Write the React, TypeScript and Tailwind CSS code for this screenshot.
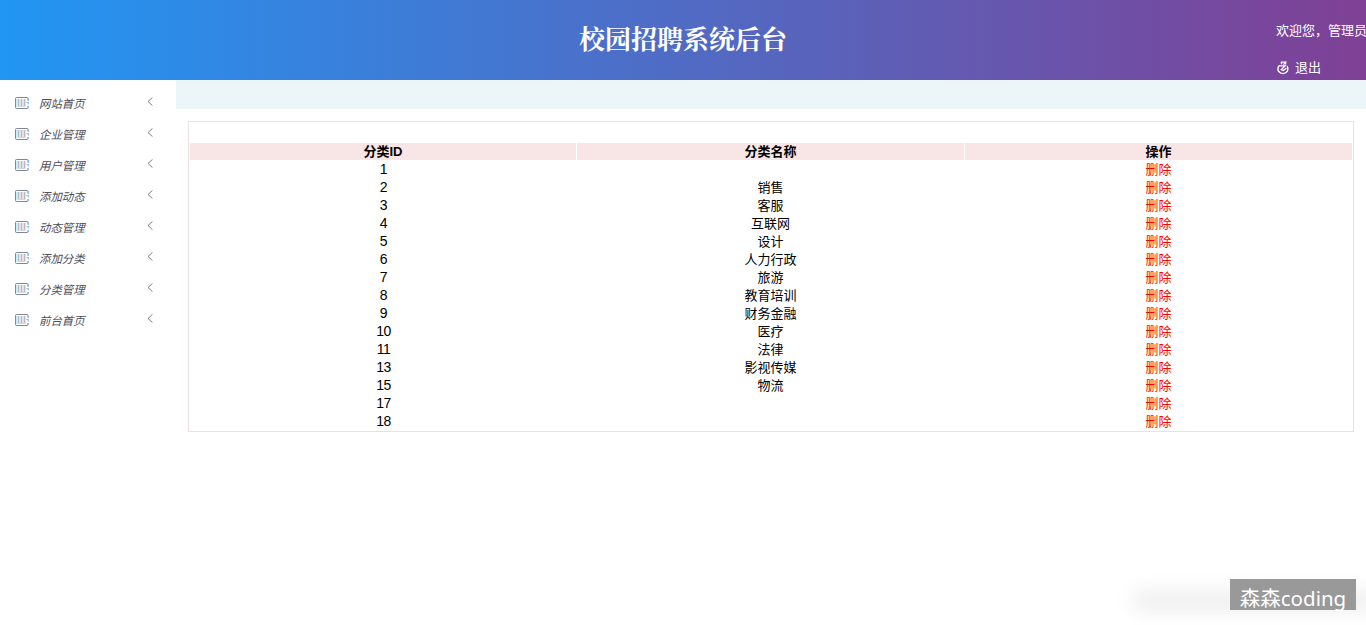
const menu = ["网站首页", "企业管理", "用户管理", "添加动态", "动态管理", "添加分类", "分类管理", "前台首页"];

const rows: [number, string][] = [
  [1, ""],
  [2, "销售"],
  [3, "客服"],
  [4, "互联网"],
  [5, "设计"],
  [6, "人力行政"],
  [7, "旅游"],
  [8, "教育培训"],
  [9, "财务金融"],
  [10, "医疗"],
  [11, "法律"],
  [13, "影视传媒"],
  [15, "物流"],
  [17, ""],
  [18, ""],
];

function ListIcon() {
  return (
    <svg width="14" height="12" viewBox="0 0 14 12" fill="none" className="-mt-[2px] shrink-0">
      <path d="M13 3.5V1.5a1 1 0 0 0-1-1H1.5a1 1 0 0 0-1 1v9a1 1 0 0 0 1 1H12a1 1 0 0 0 1-1V9" stroke="#7f8796" />
      <path d="M1.5 1.5v9" stroke="#c4f0fa" />
      <path d="M3.5 2v7M6.5 2v7M9.5 2v7" stroke="#b9b8c4" strokeWidth="1.8" />
      <path d="M2.5 9.5h8" stroke="#d3d6dd" />
      <path d="M13.3 1v3M13.3 5v2.5M13.3 9v2" stroke="#8fbce8" strokeWidth="1.2" />
      <path d="M11.5 5.5h1.3" stroke="#9caabb" />
    </svg>
  );
}

function ExitIcon() {
  return (
    <svg width="12" height="14" viewBox="0 0 12 14" fill="none" stroke="#fff" className="shrink-0">
      <path d="M2.6 4.4A5 4.6 0 1 0 10 5.2" strokeWidth="1.4" />
      <path d="M3.8 1.2h4.8L6.5 3.6M8.6 1.2v2.2M4 1.2l.8 2" strokeWidth="1.3" />
      <path d="M2.8 4.8h5.4L4.3 8.6l1.8 1 3.4-2.4" strokeWidth="1.3" />
    </svg>
  );
}

export default function App() {
  return (
    <div className="relative flex h-[625px] w-full flex-col overflow-hidden bg-white font-['Liberation_Sans','Noto_Sans_CJK_SC',sans-serif] text-[13px] text-black">
      <header className="grid h-20 shrink-0 grid-cols-[1fr_auto_1fr] bg-linear-to-r/srgb from-[#2196f3] to-[#7f4095] text-white">
        <div />
        <h1 className="pt-[18px] font-['Noto_Serif_CJK_SC','Noto_Sans_CJK_SC',serif] text-[26px] leading-[40px] font-bold whitespace-nowrap">
          校园招聘系统后台
        </h1>
        <div className="flex w-[90px] flex-col justify-self-end pt-[21px] whitespace-nowrap">
          <span className="leading-5">欢迎您，管理员</span>
          <a className="mt-[17px] flex items-center gap-[6px] pl-px leading-5">
            <ExitIcon />
            退出
          </a>
        </div>
      </header>

      <div className="flex flex-1">
        <aside className="w-44 shrink-0 pt-2">
          {menu.map((item) => (
            <a key={item} className="flex h-[31px] items-center pr-[23px] pl-[15px]">
              <ListIcon />
              <span className="ml-[10px] flex-1 pt-px text-[11.4px] leading-5 text-[#4b4e5c] italic">{item}</span>
              <svg width="6" height="9" viewBox="0 0 6 9" fill="none" className="-mt-[5px]">
                <path d="M5.4.5 1 4.5l4.4 4" stroke="#787e8b" strokeWidth="1" />
              </svg>
            </a>
          ))}
        </aside>

        <main className="flex-1">
          <div className="h-[29px] bg-[#ecf5f8]" />
          <div className="mx-3 mt-3 border border-[#e9e2e5] pt-[21px]">
            <div className="mr-px ml-px grid grid-cols-[386fr_387fr_387fr] gap-px text-center font-bold">
              {["分类ID", "分类名称", "操作"].map((title) => (
                <div key={title} className="h-[17px] bg-[#f8e6e6] leading-[18px]">
                  {title}
                </div>
              ))}
            </div>
            <div className="pt-px">
              {rows.map(([id, name]) => (
                <div
                  key={id}
                  className="mr-px ml-px grid h-[18px] grid-cols-[386fr_387fr_387fr] gap-px text-center leading-[18px]"
                >
                  <span className="pl-px text-[14px] leading-[17px] tracking-[-0.5px]">{id}</span>
                  <span>{name}</span>
                  <a className="text-[#ff0000]">删除</a>
                </div>
              ))}
            </div>
          </div>
        </main>
      </div>

      <div className="absolute top-[590px] left-[1134px] h-[22px] w-[240px] bg-black/6 blur-[9px]" />
      <div className="absolute top-[579px] left-[1230px] h-[31px] w-[126px] bg-[#999999] pt-[4px] text-center font-['Noto_Sans','Noto_Sans_CJK_SC',sans-serif] text-[20.5px] leading-[31px] whitespace-nowrap text-white">
        森森coding
      </div>
    </div>
  );
}
